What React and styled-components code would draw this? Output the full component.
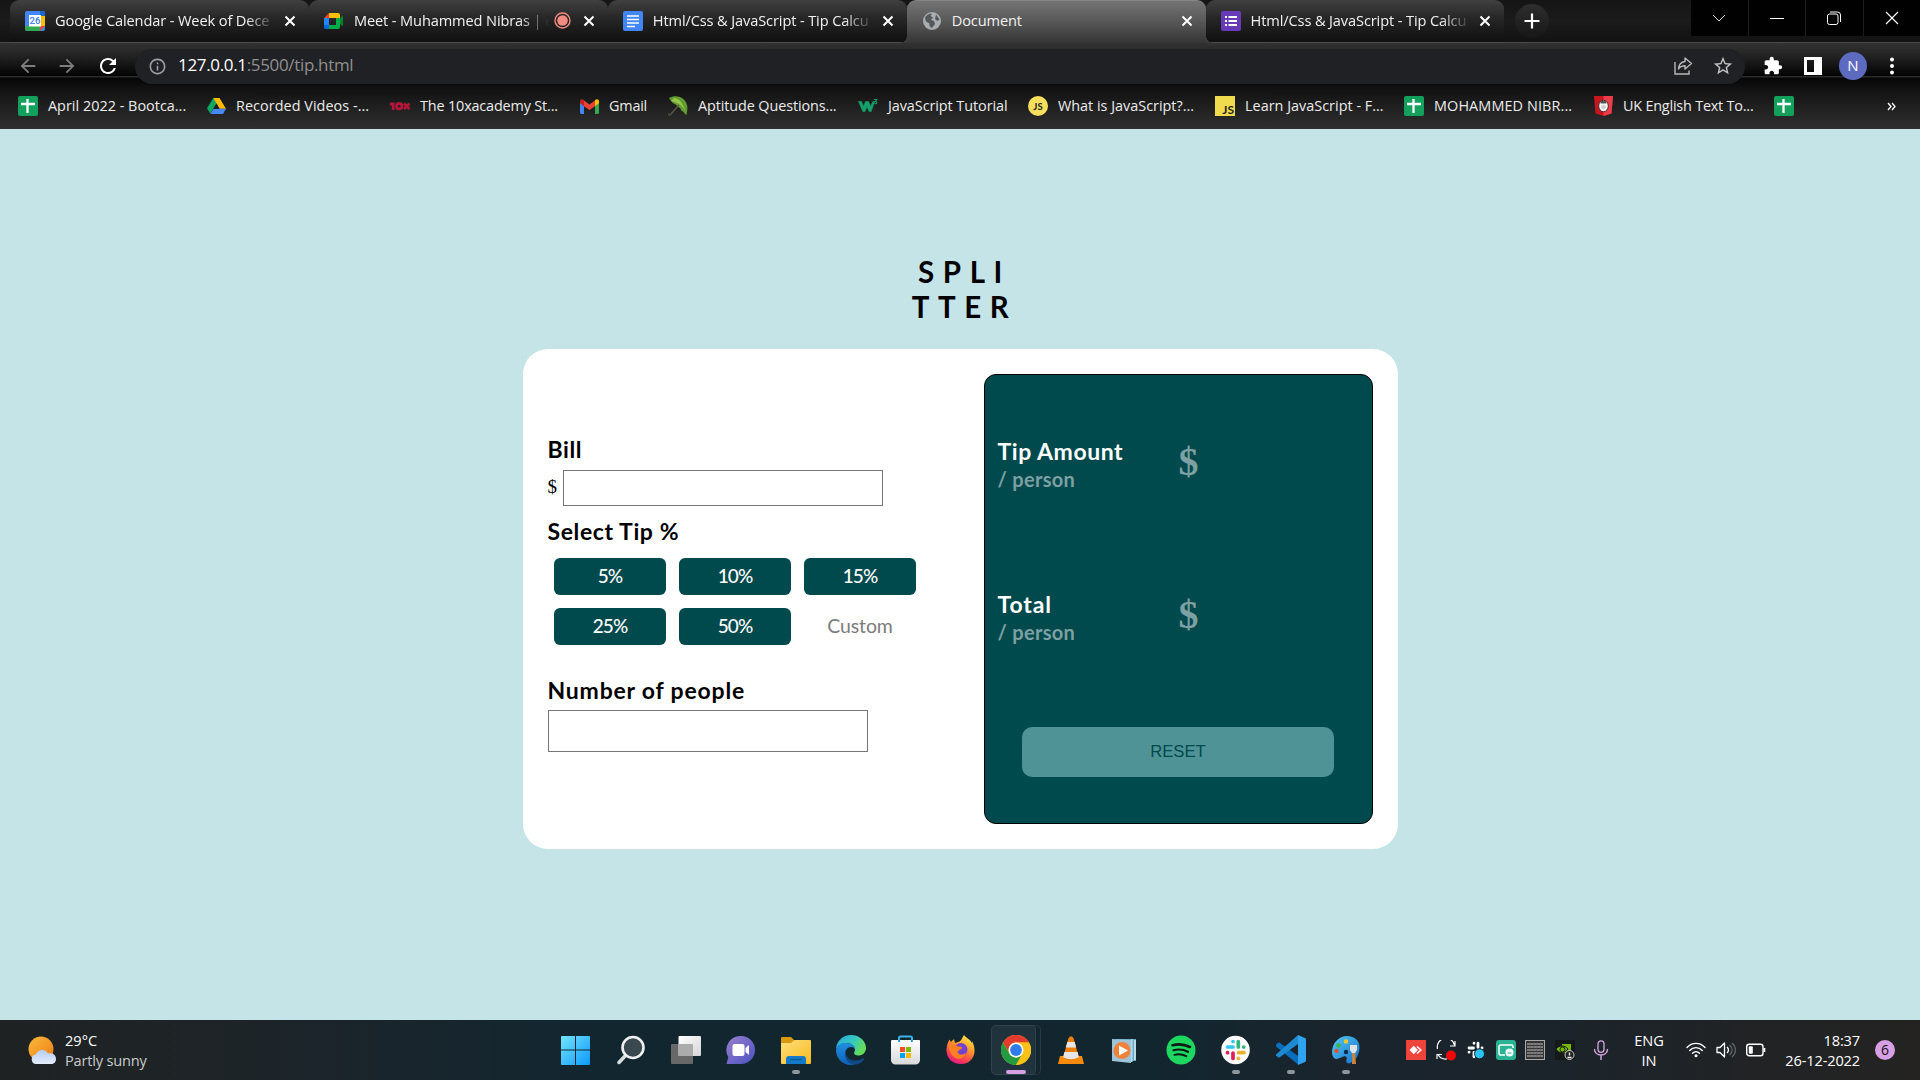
import React from "react";
import styled, { createGlobalStyle, css } from "styled-components";
import { MdArrowBack, MdArrowForward, MdRefresh, MdInfoOutline, MdStarBorder, MdExtension } from "react-icons/md";

const ui = `"Open Sans", "Noto Sans", sans-serif`;
const body = `Lato, "Open Sans", sans-serif`;

const Global = createGlobalStyle`
  * { box-sizing: border-box; }
  body { margin: 0; background: #c5e4e7; overflow: hidden; }
  svg { display: block; flex: none; }
`;

const Screen = styled.div`
  width: 1920px;
  height: 1080px;
  display: flex;
  flex-direction: column;
  font-family: ${ui};
  overflow: hidden;
`;

/* ---------- browser chrome ---------- */
const TabStrip = styled.header`
  height: 42px;
  display: flex;
  background: linear-gradient(#151515, #1b1b1b 50%, #121212);
  padding-left: 10px;
`;
const Tab = styled.div`
  width: 298.9px;
  height: ${(p) => (p.$active ? 43 : 41)}px;
  flex: none;
  display: flex;
  align-items: center;
  padding: 0 13px 0 15px;
  border-radius: 9px 9px 0 0;
  background: linear-gradient(#404040, #262626 45%, #101010);
  color: #f1f1f1;
  position: relative;
  ${(p) => p.$divider && css`
    &::after {
      content: "";
      position: absolute;
      right: -1px;
      top: 9px;
      width: 1px;
      height: 26px;
      background: #5b5b5b;
    }
  `}
  ${(p) => p.$active && css`
    padding-bottom: 2px;
    background: linear-gradient(#747474, #5a5a5a 45%, #353535);
    border-top: 1px solid #858585;
    z-index: 1;
    &::before, &::after {
      content: "";
      position: absolute;
      bottom: 0;
      width: 7px;
      height: 7px;
    }
    &::before { left: -7px; background: radial-gradient(circle at 0 0, transparent 6.5px, #3a3a3a 7px); }
    &::after { right: -7px; background: radial-gradient(circle at 100% 0, transparent 6.5px, #3a3a3a 7px); }
  `}
`;
const TabLabel = styled.span`
  flex: 1;
  min-width: 0;
  margin: 0 ${(p) => p.$right || 9}px 2px 10px;
  font-size: 14.6px;
  line-height: 38px;
  letter-spacing: -0.12px;
  white-space: nowrap;
  mask-image: ${(p) => (p.$fade ? "linear-gradient(to right, #000 calc(100% - 30px), transparent)" : "none")};
`;
const NewTab = styled.div`
  width: 34px;
  height: 34px;
  margin: 4px 0 0 11px;
  border-radius: 50%;
  background: linear-gradient(#2e2e2e, #171717);
  display: grid;
  place-items: center;
`;
const WindowButtons = styled.div`
  margin-left: auto;
  display: flex;
  gap: 1px;
  height: 36px;
  background: #1d1d1d;
`;
const WindowButton = styled.div`
  width: 56.5px;
  background: #010101;
  display: grid;
  place-items: center;
`;
const ChromeBars = styled.div`
  height: 87px;
  background: linear-gradient(#4b4b4b 0, #4b4b4b 1px, #323232 1px, #222 14px, #050505 33px, #000 34px, #2c2c2c 34px, #2c2c2c 35px, #050505 36px, #111 46px, #303030 87px);
`;
const Toolbar = styled.div`
  height: 47px;
  display: flex;
  align-items: center;
  padding: 0 0 0 15px;
`;
const NavIcon = styled.div`
  width: ${(p) => p.$w || 40.5}px;
  flex: none;
  display: flex;
  justify-content: ${(p) => (p.$left ? "flex-start" : "center")};
  font-size: 24px;
  color: ${(p) => p.$color || "#7e7e7e"};
`;
const Omnibox = styled.div`
  width: 1610px;
  height: 35px;
  margin: 1px 0 0 -1px;
  border-radius: 18px;
  background: #202124;
  display: flex;
  align-items: center;
  padding: 0 11px 0 13px;
  color: #9aa0a6;
`;
const Url = styled.span`
  margin: -2px auto 0 11px;
  font-size: 17px;
  letter-spacing: -0.34px;
  line-height: 32px;
  color: #8f8f8f;
  b { font-weight: 400; color: #fff; }
`;
const OmniIcons = styled.div`
  display: flex;
  gap: 19px;
  align-items: center;
  font-size: 22px;
  color: #c0c0c0;
`;
const Actions = styled.div`
  display: flex;
  align-items: center;
  color: #fff;
  padding-left: 18px;
  gap: 20px;
  font-size: 20px;
`;
const Avatar = styled.div`
  width: 28px;
  height: 28px;
  border-radius: 50%;
  background: #5c6bc0;
  font-size: 15px;
  line-height: 27px;
  text-align: center;
  margin: 0 -7px 0 -4px;
`;
const Bookmarks = styled.nav`
  height: 40px;
  display: flex;
  align-items: center;
  padding: 0 0 6px 18px;
  color: #ececec;
`;
const Bookmark = styled.div`
  width: ${(p) => p.$w}px;
  flex: none;
  display: flex;
  align-items: center;
  gap: 10px;
  font-size: 14.4px;
  line-height: 34px;
  letter-spacing: ${(p) => p.$ls}px;
  white-space: nowrap;
`;

/* ---------- page ---------- */
const Page = styled.main`
  height: 891px;
  background: #c5e4e7;
  display: flex;
  flex-direction: column;
  align-items: center;
  padding-top: 125px;
  font-family: ${body};
  color: #000;
`;
const Title = styled.h1`
  margin: 0 0 25px 9px;
  font-size: 29.5px;
  line-height: 35px;
  font-weight: 700;
  letter-spacing: 8.6px;
  text-align: center;
`;
const Card = styled.section`
  width: 875px;
  height: 500px;
  border-radius: 25px;
  background: #fff;
  padding: 25px;
  display: flex;
  justify-content: space-between;
`;
const Form = styled.div`
  padding-top: 61px;
`;
const Heading = styled.h2`
  margin: ${(p) => p.$top || 0}px 0 0;
  font-size: 23px;
  line-height: 28px;
  font-weight: 700;
  letter-spacing: ${(p) => p.$ls || 0.6}px;
`;
const BillRow = styled.div`
  display: flex;
  align-items: center;
  justify-content: space-between;
  width: 335px;
  margin-top: 7px;
  font: 19px/34px "Liberation Serif", serif;
`;
const Field = styled.input`
  display: block;
  width: 320px;
  height: ${(p) => p.$h}px;
  margin: ${(p) => p.$top || 0}px 0 0;
  border: 1px solid #767676;
  background: #fff;
  outline: none;
`;
const Dollar = styled.span`
  padding-bottom: 2px;
`;
const TipGrid = styled.div`
  display: grid;
  grid-template-columns: repeat(3, 112px);
  grid-auto-rows: 37px;
  gap: 13px;
  margin: 13px 0 0 6px;
`;
const TipButton = styled.button`
  border: 0;
  border-radius: 6px;
  padding: 0 0 2px 1px;
  background: ${(p) => (p.$plain ? "#fff" : "#00494d")};
  color: ${(p) => (p.$plain ? "#7c7c7c" : "#fff")};
  font: ${(p) => (p.$plain ? "400 19.5px" : "500 19px")}/35px ${body};
  letter-spacing: ${(p) => (p.$plain ? -0.1 : -0.9)}px;
`;
const Results = styled.aside`
  width: 389px;
  height: 450px;
  border: 1px solid #000;
  border-radius: 12px;
  background: #00494d;
  padding: 62px 13px 0;
`;
const ResultRow = styled.div`
  display: grid;
  grid-template-columns: 181px 1fr;
  height: 57px;
  margin-bottom: ${(p) => p.$after}px;
  color: #fff;
`;
const PerPerson = styled.div`
  font-size: 20px;
  line-height: 29px;
  font-weight: 700;
  letter-spacing: 0.3px;
  color: #7da0a2;
`;
const Amount = styled.div`
  font: 700 40px/50px "Liberation Serif", serif;
  color: #7da0a2;
`;
const Reset = styled.button`
  display: block;
  width: 312px;
  height: 50px;
  margin-left: 24px;
  padding: 0 0 1px 1px;
  border: 0;
  border-radius: 10px;
  background: #4f9397;
  color: #00494d;
  font: 16.7px/49px "Liberation Sans", Arial, sans-serif;
`;

/* ---------- taskbar ---------- */
const Taskbar = styled.footer`
  height: 60px;
  background: linear-gradient(90deg, #1f2223 0, #1e2427 200px, #18252d 420px, #122630 600px, #122630 1150px, #1a242c 1350px, #1b242b 1550px, #212325 1750px, #242322 1920px);
  display: flex;
  align-items: center;
  color: #fff;
  font-size: 14.6px;
  line-height: 20px;
`;
const Weather = styled.div`
  width: 548px;
  display: flex;
  align-items: center;
  gap: 9px;
  padding-left: 28px;
`;
const Muted = styled.div`
  color: #c9cbcc;
  letter-spacing: -0.2px;
`;
const Apps = styled.div`
  display: flex;
`;
const AppSlot = styled.div`
  width: 55px;
  height: 60px;
  display: flex;
  flex-direction: column;
  align-items: center;
  padding-top: 15px;
`;
const ActiveFrame = styled.div`
  width: 50px;
  height: 50px;
  margin: -10px 0 0;
  border: 1px solid #2b3b43;
  border-left: 0;
  border-radius: 5px;
  display: flex;
`;
const ActiveInner = styled.div`
  width: 45px;
  height: 50px;
  margin-top: -1px;
  border: 1px solid #33434b;
  border-radius: 5px;
  background: #20333c;
  display: flex;
  flex-direction: column;
  align-items: center;
  padding: 9px 0 0 6px;
`;
const Dot = styled.div`
  width: ${(p) => (p.$wide ? 20 : 8)}px;
  height: 4px;
  border-radius: 2px;
  margin-top: 5px;
  background: ${(p) => (p.$wide ? "#d79fdf" : "#8d969b")};
`;
const Tray = styled.div`
  display: flex;
  align-items: center;
  margin-left: 33px;
  gap: 9.5px;
`;
const Language = styled.div`
  width: 40px;
  margin: 0 17px 0 12px;
  text-align: center;
`;
const Clock = styled.div`
  width: 84px;
  text-align: right;
  letter-spacing: -0.15px;
  white-space: nowrap;
`;
const Badge = styled.div`
  width: 20px;
  height: 20px;
  margin-left: 5px;
  border-radius: 50%;
  background: #d79fe4;
  color: #111;
  font-size: 14px;
  line-height: 20px;
  text-align: center;
`;

/* ---------- drawings ---------- */
const Svg = ({ w = 20, h, vb, children }) => (
  <svg width={w} height={h || w} viewBox={vb || `0 0 ${w} ${h || w}`} fill="none">{children}</svg>
);
const Cross = () => <Svg w={12}><path d="M1.5 1.5l9 9M10.5 1.5l-9 9" stroke="#fff" strokeWidth="2" /></Svg>;

const CalendarIcon = () => (
  <Svg>
    <rect width="20" height="20" rx="2" fill="#4285f4" />
    <path d="M15 0h3a2 2 0 0 1 2 2v3h-5z" fill="#1967d2" />
    <path d="M15 5h5v10h-5z" fill="#fbbc04" />
    <path d="M0 15h15v5H2a2 2 0 0 1-2-2z" fill="#34a853" />
    <path d="M15 15h5l-5 5z" fill="#ea4335" />
    <path d="M4 4h12v11.500H4z" fill="#fff" />
    <text x="9.900" y="13.300" fontSize="9.500" fontWeight="600" textAnchor="middle" fill="#4285f4" fontFamily="Roboto, sans-serif">26</text>
  </Svg>
);
const MeetIcon = () => (
  <Svg>
    <path d="M0 7l5-5v5z" fill="#ea4335" />
    <path d="M5 2h9a2 2 0 0 1 2 2v3h-4V7H5z" fill="#fbbc04" />
    <path d="M0 7h5v7H0z" fill="#2684fc" />
    <path d="M0 14h5v4H1.500A1.500 1.500 0 0 1 0 16.500z" fill="#0066da" />
    <path d="M5 14h7v-2l4 3v1a2 2 0 0 1-2 2H5zM12 7h4v8l-4-3z" fill="#00ac47" />
    <path d="M16 7l3-2.500v11L16 13z" fill="#00832d" />
  </Svg>
);
const Recording = () => (
  <Svg w={17}><circle cx="8.500" cy="8.500" r="7.500" stroke="#f28b82" strokeWidth="1.400" /><circle cx="8.500" cy="8.500" r="5.300" fill="#f28b82" /></Svg>
);
const DocIcon = () => (
  <Svg><rect width="20" height="20" rx="2" fill="#4285f4" /><path d="M4 5h12M4 8.500h12M4 12h12M4 15.500h8" stroke="#fff" strokeWidth="1.700" /></Svg>
);
const GlobeIcon = () => (
  <Svg>
    <circle cx="10" cy="10" r="9" fill="#a9adb0" />
    <path d="M3 7c1-3 4-4.500 7-4.500L8.500 5 11 6.500 9 9l3 1 1 3-3 4c-2-1-3-2-2.500-4.500L4 10.500zM14 3.500l3.500 5-2 1.500-2.500-2 .5-2z" fill="#55585a" />
  </Svg>
);
const FormsIcon = () => (
  <Svg><rect width="20" height="20" rx="2" fill="#673ab7" /><path d="M7.500 6H16M7.500 10H16M7.500 14H16" stroke="#fff" strokeWidth="2" /><path d="M4 6h2M4 10h2M4 14h2" stroke="#fff" strokeWidth="2" /></Svg>
);
const SheetIcon = () => (
  <Svg><rect width="20" height="20" rx="2" fill="#12a05c" /><path d="M9.500 3v14M3 8h14" stroke="#fff" strokeWidth="2.300" /></Svg>
);
const DriveIcon = () => (
  <Svg w={19} h={18}>
    <path d="M6.300 1h6.200L9.500 6.300 3.300 16.500 0 11.300z" fill="#11a861" />
    <path d="M6.300 1h6.200L19 11.700h-6.300z" fill="#ffba00" />
    <path d="M6.500 11.700H19L16 17H3.300z" fill="#4688f4" />
    <path d="M9.500 7l2.700 4.700H6.800z" fill="#1c1c1c" />
  </Svg>
);
const TenXIcon = () => (
  <Svg>
    <path d="M0 8h2.500M3.200 6.500v7.500" stroke="#b3163a" strokeWidth="2.800" />
    <circle cx="9.200" cy="10.200" r="2.700" stroke="#b3163a" strokeWidth="2.800" />
    <path d="M14 7.500l5.500 5.500M19.500 7.500L14 13" stroke="#b3163a" strokeWidth="2.800" />
  </Svg>
);
const GmailIcon = () => (
  <Svg w={19} h={15}>
    <path d="M0 3v10.500A1.500 1.500 0 0 0 1.500 15H4V5z" fill="#4285f4" />
    <path d="M19 3v10.500a1.500 1.500 0 0 1-1.500 1.500H15V5z" fill="#34a853" />
    <path d="M4 1.500v5.700L9.500 11 15 7.200V1.500L9.500 5.600z" fill="#ea4335" />
    <path d="M0 2.500C0 .3 2.200-.4 4 1.200v6L0 4.200z" fill="#c5221f" />
    <path d="M19 2.500c0-2.200-2.200-2.900-4-1.300v6l4-3z" fill="#fbbc04" />
  </Svg>
);
const UmbrellaIcon = () => (
  <Svg w={20}>
    <path d="M1 2C8-2 17 1 19 9c.8 3 .2 6-.5 10-2-1-2.500-2.500-3.500-3.500-1-.5-2-.5-2.500-3C11 11 9 11 8 8.500 5 8 3 5 1 2z" fill="#5f9b2e" />
    <path d="M6 2c5 0 9 5 12 15-3-8-8-10-15-12z" fill="#96c34d" />
    <path d="M11 9L3 18c-1 1.500-2.500 1-2.500-.5" stroke="#605548" strokeWidth="1.300" />
  </Svg>
);
const W3Icon = () => (
  <Svg><path d="M.5 5.500h3l2 5 2-5h3l2.200 5 2-5h2L13.200 15.500H11L9 10.500 7 15.500H4.800z" fill="#13a06b" stroke="#13a06b" strokeWidth=".6" /><path d="M16 3.500h2.800l-1.500 2c2.200 0 2 2.700-.9 2" stroke="#13a06b" strokeWidth="1.100" /></Svg>
);
const JsRound = () => (
  <Svg><circle cx="10" cy="10" r="10" fill="#f7df5e" /><text x="10" y="13.500" fontSize="9.500" fontWeight="700" textAnchor="middle" fill="#222" fontFamily="Lato, sans-serif">JS</text></Svg>
);
const JsSquare = () => (
  <Svg><rect width="20" height="20" fill="#f0db4f" /><text x="19" y="18" fontSize="12" fontWeight="700" textAnchor="end" fill="#222" fontFamily="Lato, sans-serif">JS</text></Svg>
);
const ShieldIcon = () => (
  <Svg w={19} h={20}><path d="M0 0h19l-1.500 17.500L9.500 20l-8-2.500z" fill="#c4161c" /><path d="M9.500 0H19l-1.500 17.500L9.500 20z" fill="#ec3d4b" /><ellipse cx="9.500" cy="10" rx="4.800" ry="5.700" fill="#fff" stroke="#4a2a2a" /><path d="M6.500 7.500h6L12 5H7z" fill="#555" /><circle cx="9.500" cy="11" r="2.400" fill="#d3d3d3" /></Svg>
);
const ShareIcon = () => (
  <Svg><path d="M2 6v12h14v-3.500" stroke="#b8b8b8" strokeWidth="1.400" /><path d="M12 2l6.500 5.500L12 13v-3.200c-3 0-5 .8-6.500 3.200.3-4.500 2.500-7 6.500-7.500z" stroke="#b8b8b8" strokeWidth="1.400" strokeLinejoin="round" /></Svg>
);

const WeatherIcon = () => (
  <Svg w={28} h={30}>
    <defs>
      <linearGradient id="sun" x1="0" y1="0" x2="1" y2="1"><stop stopColor="#f8bb3a" /><stop offset="1" stopColor="#ee7a16" /></linearGradient>
      <linearGradient id="cl" x1="0" y1="0" x2="0" y2="1"><stop stopColor="#b6cbf5" /><stop offset="1" stopColor="#e5edfb" /></linearGradient>
    </defs>
    <circle cx="13" cy="14" r="12.500" fill="url(#sun)" />
    <path d="M8 29a4.800 4.800 0 0 1-.3-9.500C9 15 17 12.500 20 18.500c4-1 8 1 8 5.500 0 3-2 5-5 5z" fill="url(#cl)" />
  </Svg>
);
const WindowsIcon = () => (
  <Svg w={29} h={30}>
    <defs><linearGradient id="win" x1="0" y1="0" x2="29" y2="29" gradientUnits="userSpaceOnUse"><stop stopColor="#75e5ff" /><stop offset="1" stopColor="#0f9bfb" /></linearGradient></defs>
    <path d="M1 1h13v13.500H0V2a1 1 0 0 1 1-1zM15 1h13a1 1 0 0 1 1 1v12.500H15zM0 15.500h14V30H1a1 1 0 0 1-1-1zM15 15.500h14V29a1 1 0 0 1-1 1H15z" fill="url(#win)" />
  </Svg>
);
const SearchIcon = () => (
  <Svg w={28} h={30}><path d="M9 20L2 27.500" stroke="#d8dde0" strokeWidth="3.500" strokeLinecap="round" /><circle cx="16" cy="12.500" r="10.500" fill="#3a4850" stroke="#eef0f1" strokeWidth="2.600" /></Svg>
);
const TaskViewIcon = () => (
  <Svg w={30}>
    <defs><linearGradient id="tv" x1="0" y1="0" x2="1" y2="1"><stop stopColor="#fff" /><stop offset="1" stopColor="#d5d5d5" /></linearGradient></defs>
    <rect y="9" width="22" height="20" rx="1" fill="#686868" /><rect x="7.500" y="1" width="22.500" height="20" rx="1" fill="url(#tv)" /><path d="M7.500 9H22v12H7.500z" fill="#ababab" />
  </Svg>
);
const ChatIcon = () => (
  <Svg w={29} h={30}>
    <defs><linearGradient id="chat" x1="0" y1="0" x2="1" y2="1"><stop stopColor="#9a80cf" /><stop offset="1" stopColor="#4b50c0" /></linearGradient></defs>
    <path d="M15 1a14 14 0 1 1 0 28H.5l1.800-7A14 14 0 0 1 15 1z" fill="url(#chat)" />
    <rect x="6.500" y="9" width="12" height="12" rx="2" fill="#fff" /><path d="M19.500 13l3.500-3v10l-3.500-3z" fill="#fff" />
  </Svg>
);
const FolderIcon = () => (
  <Svg w={30}>
    <defs><linearGradient id="fo" x1="0" y1="0" x2="1" y2="1"><stop stopColor="#ffe07a" /><stop offset="1" stopColor="#f8b91f" /></linearGradient></defs>
    <path d="M0 3a1 1 0 0 1 1-1h9l4 4v6H0z" fill="#d99a12" /><path d="M0 8h10l3.500-3H29a1 1 0 0 1 1 1v22a1 1 0 0 1-1 1H1a1 1 0 0 1-1-1z" fill="url(#fo)" />
    <path d="M5 29v-5a3 3 0 0 1 3-3h14a3 3 0 0 1 3 3v5z" fill="#1479c8" /><path d="M9 24.500h12" stroke="#07599c" strokeWidth="1.200" />
  </Svg>
);
const EdgeIcon = () => (
  <Svg w={30}>
    <defs>
      <linearGradient id="e1" x1="0" y1="0" x2="1" y2=".4"><stop stopColor="#2aa5e0" /><stop offset=".6" stopColor="#35c8c0" /><stop offset="1" stopColor="#63dc5a" /></linearGradient>
      <linearGradient id="e2" x1="0" y1="0" x2="0" y2="1"><stop stopColor="#1f8fe0" /><stop offset="1" stopColor="#0d62b8" /></linearGradient>
    </defs>
    <path d="M0 15C0 6 7 0 15 0c9 0 15 6.500 15 13 0 5-4 7.500-7.500 7.500-3 0-4.500-1.500-4.500-2.500s1-1.500 1-3.500C19 11 15 8 10.500 8 5 8 1 11 0 15z" fill="url(#e1)" />
    <path d="M0 15C1 10 5 8 10 8c5 0 9 3 9 6.500-1-2-3-2.500-4-2.500-4 0-6.500 4-5.500 8.500C10.500 25 14 29 19 29.500 8 32 0 24 0 15z" fill="url(#e2)" />
    <path d="M10 16c-1 5 3 10 10 9.500 3 0 5-1 6.500-2 1-.6 2 .3 1.300 1.300C25.500 28 22 30 17 29.700 11 28.500 7 21 10 16z" fill="#114a8b" />
  </Svg>
);
const StoreIcon = () => (
  <Svg w={29} h={30}>
    <defs><linearGradient id="st" x1="0" y1="0" x2="0" y2="1"><stop stopColor="#fff" /><stop offset="1" stopColor="#d8d8d8" /></linearGradient></defs>
    <path d="M8 6V3a1.500 1.500 0 0 1 1.500-1.500h10A1.500 1.500 0 0 1 21 3v3" stroke="#3bb3ea" strokeWidth="2" />
    <path d="M0 6a1 1 0 0 1 1-1h27a1 1 0 0 1 1 1v19a4.500 4.500 0 0 1-4.500 4.500h-20A4.500 4.500 0 0 1 0 25z" fill="url(#st)" />
    <path d="M9 12h5v5H9z" fill="#f25022" /><path d="M15 12h5v5h-5z" fill="#7fba00" /><path d="M9 18h5v5H9z" fill="#00a4ef" /><path d="M15 18h5v5h-5z" fill="#ffb900" />
    <path d="M7.200 5h1.800v2H7.200zM20 5h1.800v2H20z" fill="#1d8fcb" />
  </Svg>
);
const FirefoxIcon = () => (
  <Svg w={29} h={30}>
    <defs><linearGradient id="ff" x1=".8" y1="0" x2=".3" y2="1"><stop stopColor="#fff04a" /><stop offset=".4" stopColor="#ff9a2a" /><stop offset=".75" stopColor="#ff4250" /><stop offset="1" stopColor="#e31587" /></linearGradient></defs>
    <path d="M18 0c2 3 6 4 8 8l0-2c6 11 1 23-11 23C6 29 0 23 .5 14 .7 10 2 7 3.500 4.500L5 7 8 4l1 4 3-1c3 0 4-4 6-7z" fill="url(#ff)" />
    <circle cx="15" cy="14.500" r="6.500" fill="#7542d0" />
    <path d="M2 10c4-2 7 0 10 1.500 2 0 4 0 4 1.500s-4 2-4.500 4c1 3 5 3.500 8 1-1 5-6 7-10 5-4-2-6-7-7.500-13z" fill="#ff8124" />
  </Svg>
);
const ChromeIcon = () => (
  <Svg w={30}>
    <circle cx="15" cy="15" r="15" fill="#fbc116" />
    <path d="M2 7.500A15 15 0 0 1 28 7.500H15a7.500 7.500 0 0 0-6.500 11.200z" fill="#e33b2e" />
    <path d="M2 7.500l6.500 11.200A7.500 7.500 0 0 0 21.500 18.700L15 30A15 15 0 0 1 2 7.500z" fill="#249a41" />
    <path d="M15 7.500h13A15 15 0 0 1 15 30l6.500-11.300A7.500 7.500 0 0 0 15 7.500z" fill="#fbc116" />
    <circle cx="15" cy="15" r="7.500" fill="#fff" /><circle cx="15" cy="15" r="5.900" fill="#2f7de9" />
  </Svg>
);
const VlcIcon = () => (
  <Svg w={26} h={30}>
    <path d="M2 21h22l2 8H0z" fill="#f58a0c" /><path d="M10.500 3Q13-.5 15.500 3L21 23q-8 5-16 0z" fill="#f07f09" />
    <path d="M9.300 7h7.400l1.500 5.500H7.800zM6.400 17h13.200l1.300 5.200q-8 4-15.800 0z" fill="#e6e6e6" />
  </Svg>
);
const MediaIcon = () => (
  <Svg w={28} h={30}>
    <path d="M4 4h20v22H4z" fill="#69a8c6" /><path d="M19 4h1.500v23H19zM22 5h2v20h-2z" fill="#b8dbea" /><path d="M0 4l19 1v23L0 26z" fill="#9cc3d6" />
    <circle cx="10" cy="15.500" r="8.500" fill="#f0813b" /><path d="M7 10.500l9 5-9 5z" fill="#fff" />
  </Svg>
);
const SpotifyIcon = () => (
  <Svg w={30}><circle cx="15" cy="15" r="14.500" fill="#1ed760" /><g stroke="#0b1a12" strokeLinecap="round"><path d="M6.500 10.200c6-1.500 12-1 17.500 1.800" strokeWidth="2.600" /><path d="M7.500 15.200c5-1.300 10-.8 14.500 1.600" strokeWidth="2.200" /><path d="M8.300 19.800c4.200-1 8.200-.6 12 1.400" strokeWidth="1.900" /></g></Svg>
);
const SlackIcon = () => (
  <Svg w={29} h={30}>
    <circle cx="14.500" cy="15" r="14.300" fill="#fff" />
    <g strokeWidth="3.700" strokeLinecap="round">
      <path d="M6.500 12h5.500M12 6.500v.1" stroke="#36c5f0" /><path d="M17.300 6.500V12M22.700 12h.1" stroke="#2eb67d" />
      <path d="M12 18v5.500M6.500 17.700h.1" stroke="#e01e5a" /><path d="M17.500 17.700H23M17.300 23.400v.1" stroke="#ecb22e" />
    </g>
  </Svg>
);
const CodeIcon = () => (
  <Svg w={30}>
    <path d="M0 9.500l3-2.300L22 21v8.500L0 11.500z" fill="#0a6ebd" /><path d="M0 19.500L22 0v9L3 22.800 0 20.800z" fill="#1f8ad2" /><path d="M22 0l7 3a1.500 1.500 0 0 1 1 1.500v21a1.500 1.500 0 0 1-1 1.500l-7 3z" fill="#2fa3ee" />
  </Svg>
);
const PaintIcon = () => (
  <Svg w={30}>
    <defs><linearGradient id="pa" x1="0" y1="0" x2="1" y2="1"><stop stopColor="#55c8f2" /><stop offset="1" stopColor="#1672cc" /></linearGradient></defs>
    <path d="M16 1c8 0 13 5 12.500 12-.4 6-3 12-9 15-3 1.400-5-1-4-3.500 1-2.500-.5-4-3-3L6 24c-3 .5-5-3-5-7C1 8 8 1 16 1z" fill="url(#pa)" />
    <circle cx="15" cy="17" r="2.200" fill="#102a45" /><circle cx="7.500" cy="10.500" r="2.300" fill="#3ab44b" /><circle cx="15" cy="6.500" r="2.300" fill="#f2c72d" /><circle cx="5.500" cy="16" r="2.200" fill="#d8552d" />
    <path d="M21 17h3l1 12h-4z" fill="#c6843c" /><path d="M19 10h7v5l-2 3h-3l-2-3z" fill="#dfe3e5" />
  </Svg>
);

const AnyDesk = () => <Svg><rect width="20" height="20" fill="#ef443b" /><path d="M3.500 10L7.700 5.800l4.200 4.200-4.200 4.200z" fill="#fff" /><path d="M11 6.500l3.800 3.500-3.800 3.500" stroke="#fff" strokeWidth="1.600" /></Svg>;
const SyncIcon = () => <Svg w={21}><path d="M1.500 9A8.500 8.500 0 0 1 18.500 5M19 1v5h-5M1 19v-4.500h5M2 14.500C4 18 7 19.500 11 19" stroke="#fff" strokeWidth="1.200" /><circle cx="15" cy="15.500" r="5" fill="#f40606" /></Svg>;
const SlackTray = () => (
  <Svg w={20}>
    <g stroke="#fff" strokeWidth="2.800" strokeLinecap="round">
      <path d="M3 8h4.500M8 3.200v.1M12 3.200V7.500M16 8h.1M8 12.300v4.500M3 12.200h.1M12 12.300h4" />
    </g>
    <circle cx="13.500" cy="13.800" r="5" fill="#27c4f5" stroke="#17242c" />
  </Svg>
);
const GreenTray = () => <Svg><rect width="20" height="20" rx="3" fill="#29b294" /><path d="M9 15H4.500A1.500 1.500 0 0 1 3 13.500v-7A1.500 1.500 0 0 1 4.500 5h11A1.500 1.500 0 0 1 17 6.500V8" stroke="#fff" strokeWidth="1.500" /><circle cx="13.500" cy="12.500" r="4" fill="#f3fffc" /><path d="M11.500 13h4" stroke="#29b294" /></Svg>;
const GridTray = () => <Svg><rect x=".5" y=".5" width="19" height="19" fill="#333" stroke="#aaa" /><path d="M2 4h16M2 7h16M2 10h16M2 13h16M2 16h16" stroke="#999" strokeWidth="1.400" /><path d="M5 2v16M8.500 2v16M12 2v16M15.500 2v16" stroke="#555" strokeWidth=".5" /></Svg>;
const NvidiaTray = () => <Svg><rect width="20" height="20" fill="#15191a" /><path d="M7 4h9v9H7z" fill="#76b900" /><path d="M1 9c3-4 9-4 12 0-3 5-9 5-12 0z" fill="#76b900" stroke="#15191a" /><circle cx="7.500" cy="9.500" r="2.500" stroke="#15191a" /><circle cx="14.500" cy="15" r="4.500" fill="#222" stroke="#ccc" /><path d="M14.500 12.500v3M12.500 17.500h4" stroke="#eee" strokeWidth="1.400" /></Svg>;
const MicTray = () => <Svg w={16} h={20}><rect x="5" y=".8" width="6" height="11.500" rx="3" stroke="#d8a7e2" strokeWidth="1.300" /><path d="M1.500 9c0 8 13 8 13 0M8 15v5" stroke="#d8a7e2" strokeWidth="1.400" /></Svg>;
const WifiTray = () => <Svg><path d="M1 7.500c5-5.500 13-5.500 18 0M3.700 10.500c3.500-3.800 9-3.800 12.600 0M6.500 13.300c2-2 5-2 7 0" stroke="#fff" strokeWidth="1.400" strokeLinecap="round" /><circle cx="10" cy="15.800" r="1.500" fill="#fff" /></Svg>;
const SoundTray = () => <Svg><path d="M1 7.500h3L8.500 3v14L4 12.500H1z" stroke="#fff" strokeWidth="1.300" strokeLinejoin="round" /><path d="M11 7c2 2 2 4 0 6" stroke="#fff" strokeWidth="1.300" /><path d="M13.500 5c3.500 3 3.500 7 0 10M16 3c4.500 4 4.500 10 0 14" stroke="#626b70" strokeWidth="1.200" /></Svg>;
const BatteryTray = () => <Svg><rect x=".7" y="4.200" width="16.300" height="11.600" rx="2.500" stroke="#fff" strokeWidth="1.400" /><rect x="2.800" y="6.200" width="4" height="7.600" rx="1" fill="#fff" /><path d="M17.500 8h1.800v4h-1.800z" fill="#fff" /></Svg>;

/* ---------- data ---------- */
const tabs = [
  { icon: <CalendarIcon />, label: "Google Calendar - Week of Dece", divider: true, fade: true },
  { icon: <MeetIcon />, label: "Meet - Muhammed Nibras | c", divider: true, fade: true, extra: <Recording /> },
  { icon: <DocIcon />, label: "Html/Css & JavaScript - Tip Calcu", fade: true },
  { icon: <GlobeIcon />, label: "Document", active: true },
  { icon: <FormsIcon />, label: "Html/Css & JavaScript - Tip Calcu", fade: true },
];
const bookmarks = [
  [<SheetIcon />, "April 2022 - Bootca...", 189, 0.02],
  [<DriveIcon />, "Recorded Videos -...", 183, 0.05],
  [<TenXIcon />, "The 10xacademy St...", 190, -0.15],
  [<GmailIcon />, "Gmail", 88, -0.2],
  [<UmbrellaIcon />, "Aptitude Questions...", 190, -0.1],
  [<W3Icon />, "JavaScript Tutorial", 170, -0.06],
  [<JsRound />, "What is JavaScript?...", 187, 0],
  [<JsSquare />, "Learn JavaScript - F...", 189, 0.02],
  [<SheetIcon />, "MOHAMMED NIBR...", 190, 0.12],
  [<ShieldIcon />, "UK English Text To...", 180, -0.2],
  [<SheetIcon />, "", 113, 0],
];
const apps = [
  [<WindowsIcon />], [<SearchIcon />], [<TaskViewIcon />], [<ChatIcon />], [<FolderIcon />, true], [<EdgeIcon />],
  [<StoreIcon />], [<FirefoxIcon />], "chrome", [<VlcIcon />], [<MediaIcon />], [<SpotifyIcon />],
  [<SlackIcon />, true], [<CodeIcon />, true], [<PaintIcon />, true],
];

export default function App() {
  return (
    <Screen>
      <Global />
      <TabStrip>
        {tabs.map((t, i) => (
          <Tab key={i} $active={t.active} $divider={t.divider}>
            {t.icon}
            <TabLabel $right={t.extra ? 5 : 8} $fade={t.fade}>{t.label}</TabLabel>
            {t.extra && <NavIcon $w={29} $left>{t.extra}</NavIcon>}
            <Cross />
          </Tab>
        ))}
        <NewTab><Svg w={16}><path d="M8 .5v15M.5 8h15" stroke="#fff" strokeWidth="2.200" /></Svg></NewTab>
        <WindowButtons>
          <WindowButton><Svg w={14}><path d="M1 4l6 6 6-6" stroke="#ddd" /></Svg></WindowButton>
          <WindowButton><Svg w={14}><path d="M0 7.500h14" stroke="#fff" /></Svg></WindowButton>
          <WindowButton><Svg w={14}><rect x=".5" y="3" width="10.500" height="10.500" rx="2" stroke="#fff" /><path d="M3 1h7.500a3 3 0 0 1 3 3v7" stroke="#fff" /></Svg></WindowButton>
          <WindowButton><Svg w={14}><path d="M1 1l12 12M13 1L1 13" stroke="#fff" strokeWidth="1.200" /></Svg></WindowButton>
        </WindowButtons>
      </TabStrip>
      <ChromeBars>
        <Toolbar>
          <NavIcon $w={25}><MdArrowBack size={22} /></NavIcon>
          <NavIcon $w={54}><MdArrowForward size={22} /></NavIcon>
          <NavIcon $w={27} $color="#fff"><MdRefresh /></NavIcon>
          <NavIcon $w={15} />
          <Omnibox>
            <MdInfoOutline size={19} />
            <Url><b>127.0.0.1</b>:5500/tip.html</Url>
            <OmniIcons><ShareIcon /><MdStarBorder /></OmniIcons>
          </Omnibox>
          <Actions>
            <MdExtension />
            <Svg w={20}><path d="M1 1h18v18H1zM4 4v12h7V4z" fill="#fff" fillRule="evenodd" /></Svg>
            <Avatar>N</Avatar>
            <Svg w={20}><circle cx="12" cy="3.500" r="2" fill="#fff" /><circle cx="12" cy="10" r="2" fill="#fff" /><circle cx="12" cy="16.500" r="2" fill="#fff" /></Svg>
          </Actions>
        </Toolbar>
        <Bookmarks>
          {bookmarks.map(([icon, label, w, ls], i) => (
            <Bookmark key={i} $w={w} $ls={ls}>{icon}<span>{label}</span></Bookmark>
          ))}
          <Svg w={9}><path d="M1 1l3 3.500L1 8M5 1l3 3.500L5 8" stroke="#fff" strokeWidth="1.300" /></Svg>
        </Bookmarks>
      </ChromeBars>

      <Page>
        <Title>SPLI<br />TTER</Title>
        <Card>
          <Form>
            <Heading>Bill</Heading>
            <BillRow><Dollar>$</Dollar><Field $h={36} /></BillRow>
            <Heading $top={11}>Select Tip %</Heading>
            <TipGrid>
              {["5%", "10%", "15%", "25%", "50%"].map((t) => <TipButton key={t}>{t}</TipButton>)}
              <TipButton $plain>Custom</TipButton>
            </TipGrid>
            <Heading $top={31} $ls={0.8}>Number of people</Heading>
            <Field $h={42} $top={6} />
          </Form>
          <Results>
            <ResultRow $after={96}>
              <div><Heading $ls={0.55}>Tip Amount</Heading><PerPerson>/ person</PerPerson></div>
              <Amount>$</Amount>
            </ResultRow>
            <ResultRow $after={80}>
              <div><Heading $ls={0.9}>Total</Heading><PerPerson>/ person</PerPerson></div>
              <Amount>$</Amount>
            </ResultRow>
            <Reset>RESET</Reset>
          </Results>
        </Card>
      </Page>

      <Taskbar>
        <Weather>
          <WeatherIcon />
          <div><div>29°C</div><Muted>Partly sunny</Muted></div>
        </Weather>
        <Apps>
          {apps.map((a, i) =>
            a === "chrome" ? (
              <AppSlot key={i}>
                <ActiveFrame><ActiveInner><ChromeIcon /><Dot $wide /></ActiveInner></ActiveFrame>
              </AppSlot>
            ) : (
              <AppSlot key={i}>{a[0]}{a[1] && <Dot />}</AppSlot>
            )
          )}
        </Apps>
        <Tray>
          <AnyDesk /><SyncIcon /><SlackTray /><GreenTray /><GridTray /><NvidiaTray />
          <NavIcon $w={33}><MicTray /></NavIcon>
        </Tray>
        <Language>ENG<br />IN</Language>
        <WifiTray /><NavIcon $w={40}><SoundTray /></NavIcon><BatteryTray />
        <NavIcon $w={10} />
        <Clock>18:37<br />26-12-2022</Clock>
        <NavIcon $w={10} />
        <Badge>6</Badge>
      </Taskbar>
    </Screen>
  );
}
